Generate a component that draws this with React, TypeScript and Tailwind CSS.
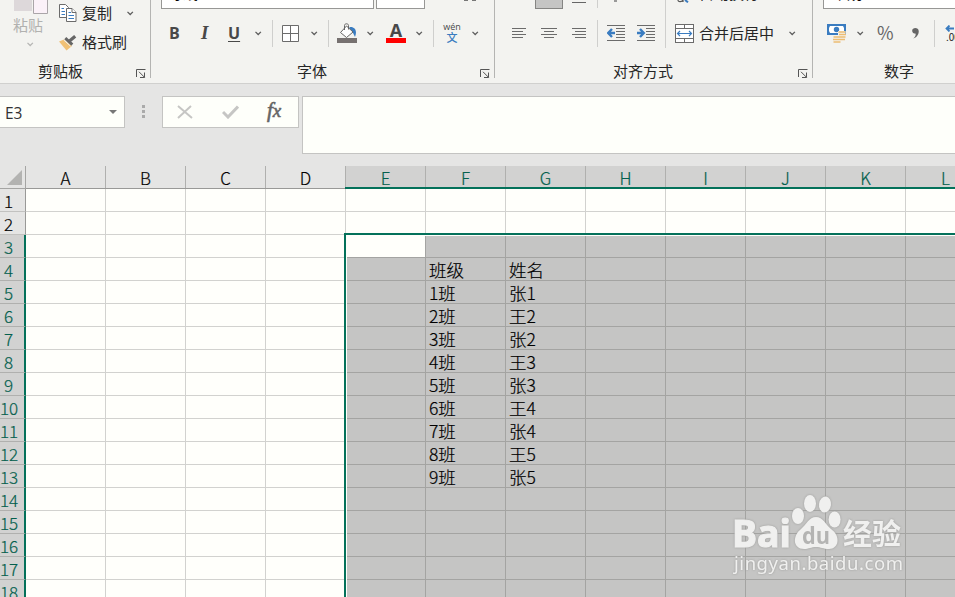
import React from "react";

const CJK = "font-['Noto_Sans_CJK_SC',sans-serif]";
const GRID_TEXT = "font-['Noto_Sans_CJK_SC',sans-serif] font-light [-webkit-text-stroke:0.2px_currentColor]";

function Chevron({ className = "" }: { className?: string }) {
  return (
    <svg width="7" height="5" viewBox="0 0 7 5" className={`shrink-0 ${className}`}>
      <path d="M0.5 0.9 3.2 3.5 5.9 0.9" fill="none" stroke="#5c5c5c" strokeWidth="1.3" />
    </svg>
  );
}

function Launcher() {
  return (
    <svg width="10" height="9" viewBox="0 0 10 9" className="shrink-0" fill="none" stroke="#555">
      <path d="M.5 8V.5H9.5M3 2.8 8.6 8.4M8.5 3.5V8.5H4" />
    </svg>
  );
}

function GroupLabel({ text, pad, launcher = true }: { text: string; pad: string; launcher?: boolean }) {
  return (
    <div className={`mt-auto flex h-[17px] shrink-0 items-start ${pad}`}>
      <span className="grow whitespace-nowrap leading-[20px]">{text}</span>
      {launcher && <div className="pt-[8px]"><Launcher /></div>}
    </div>
  );
}

function CopyIcon() {
  return (
    <svg width="18" height="19" viewBox="0 0 18 19" fill="#fff" stroke="#6b6b6b">
      <path d="M.5 .5H6.5L9.5 3.5V13.5H.5Z" />
      <path d="M7.5 4.5H13L17 8.5V17.5H7.5Z" />
      <path d="M13 4.5V8.5H17" />
      <path d="M2.5 4.5H5M2.5 7.5H6M2.5 10.5H6M9.5 8.5H12M9.5 11.5H15M9.5 14.5H15" stroke="#3a7cc0" />
    </svg>
  );
}

function BrushIcon() {
  return (
    <svg width="18" height="16" viewBox="0 0 18 16">
      <path d="M0 6.5 5 4.5 13 11 7.5 15.5Z" fill="#f0c176" />
      <path d="M6.3 3.2 13.3 9.6" stroke="#666" strokeWidth="3" />
      <path d="M10.8 5.8 16.2 1.2" stroke="#666" strokeWidth="3.2" />
      <path d="M4.8 5 11.6 11.2" stroke="#f3f3f0" strokeWidth="1" />
    </svg>
  );
}

function BucketIcon() {
  return (
    <svg width="20" height="20" viewBox="0 0 20 20">
      <path d="M13 4C18 3.5 20.500 8 18 14C16.5 11 15.5 8 12 5Z" fill="#3a7cc0" />
      <path d="M9.5 3 16 9 9.5 14.5 3.5 9.5Z" fill="#fff" stroke="#666" />
      <path d="M7.5 7V2.5C7.5.2 11.5.2 11.5 2.5V6.5" fill="none" stroke="#666" />
      <path d="M0 15H20V20H0Z" fill="#767170" />
    </svg>
  );
}

function AlignIcon({ kind }: { kind: "left" | "center" | "right" }) {
  const d = {
    left: "M0 .5H14M0 3.5H11M0 6.5H14M0 9.5H11",
    center: "M0 .5H16M3 3.5H13M0 6.5H16M3 9.5H13",
    right: "M0 .5H14M3 3.5H14M0 6.5H14M3 9.5H14",
  }[kind];
  return (
    <svg width={kind === "center" ? 16 : 14} height="10" className="shrink-0">
      <path d={d} stroke="#6b6b6b" />
    </svg>
  );
}

function IndentIcon({ out }: { out?: boolean }) {
  return (
    <svg width="18" height="17" viewBox="0 0 18 17" className="shrink-0" fill="none">
      <path d="M0 .5H18M9 3.5H18M9 6.5H18M9 9.5H18M9 12.5H18M0 15.5H18" stroke="#6b6b6b" />
      {out ? (
        <path d="M8 8H2M5 4 1.2 8 5 12" stroke="#3a7cc0" strokeWidth="2.4" />
      ) : (
        <path d="M0 8H6M3 4 6.8 8 3 12" stroke="#3a7cc0" strokeWidth="2.4" />
      )}
    </svg>
  );
}

function MergeIcon() {
  return (
    <svg width="19" height="19" viewBox="0 0 19 19" className="shrink-0" fill="none" stroke="#6b6b6b">
      <rect x=".5" y=".5" width="18" height="18" fill="#fff" />
      <path d="M0 4.5H19M0 14.5H19M9.5 0V4M9.5 15V19" />
      <path d="M2.5 9.5H16.5M5 7 2.5 9.5 5 12M14 7 16.5 9.5 14 12" stroke="#3a7cc0" strokeWidth="1.2" />
    </svg>
  );
}

function MoneyIcon() {
  return (
    <svg width="19" height="19" viewBox="0 0 19 19" className="shrink-0">
      <rect width="19" height="11" fill="#3a7cc0" />
      <path d="M3 2H16L17 4V7L16 9H3L2 7V4Z" fill="#fff" />
      <circle cx="9.5" cy="5.5" r="2.7" fill="#3a7cc0" />
      <path d="M11 8V7H18.5V17H11Z M6 12H13.5V19H6Z" fill="#f3f3f0" />
      <path d="M11.5 8H18.5M12 10.5H19M11.5 13H18.5M12 15.5H18M6.5 13H13.5M6 15.5H13M6.5 18H13.5" stroke="#edbd72" strokeWidth="1.7" />
    </svg>
  );
}

function Ribbon() {
  return (
    <div className={`flex h-[84px] shrink-0 overflow-hidden border-b border-[#d0d0ce] bg-[#f3f3f0] text-[15px] text-[#262626] ${CJK}`}>
      <section className="flex h-[78px] w-[151px] shrink-0 flex-col border-r border-[#b4b4b2]">
        <div className="flex h-[58px]">
          <div className="flex w-[60px] flex-col items-center text-[#b1b1af]">
            <svg width="34" height="14" className="ml-[2px] shrink-0">
              <path d="M0 0H18V11H0Z" fill="#ddd8da" />
              <path d="M19.500 -1H33.500V13.500H19.500Z" fill="#fbf1f8" stroke="#aaa5a8" />
            </svg>
            <span className="-mt-px whitespace-nowrap pr-1 leading-[24px]">粘贴</span>
            <Chevron className="mt-[5px] opacity-40" />
          </div>
          <div className="flex flex-col">
            <div className="flex h-[27px] items-center">
              <div className="-ml-px w-[23px]"><CopyIcon /></div>
              <span>复制</span>
              <Chevron className="ml-[15px]" />
            </div>
            <div className="flex h-[31px] items-center">
              <div className="-ml-px w-[23px]"><BrushIcon /></div>
              <span>格式刷</span>
            </div>
          </div>
        </div>
        <GroupLabel text="剪贴板" pad="pl-[38px] pr-1" />
      </section>

      <section className="flex h-[78px] w-[344px] shrink-0 flex-col border-r border-[#b4b4b2]">
        <div className="flex h-[9px] shrink-0 overflow-hidden pl-[10px]">
          <div className="flex h-[9px] w-[213px] items-end overflow-hidden border-x border-b border-[#979795] bg-white pl-[6px] text-black"><span className="mb-[8px] leading-[15px]">等线</span></div>
          <div className="ml-[2px] h-[9px] w-[49px] border-x border-b border-[#979795] bg-white" />
          <div className="ml-[39px] h-px w-[4px] bg-[#777]" />
          <div className="ml-[4px] h-px w-[4px] bg-[#777]" />
        </div>
        <div className="flex h-[48px] shrink-0 items-center text-[#484848]">
          <b className="ml-[18px] w-[32px] font-['Open_Sans',sans-serif] text-[16px]">B</b>
          <b className="w-[27px] font-['Liberation_Serif',serif] text-[19px] italic">I</b>
          <b className="w-[27px] font-['Open_Sans',sans-serif] text-[16px] underline underline-offset-2">U</b>
          <Chevron />
          <div className="ml-[10px] h-[27px] w-px bg-[#cfcfcd]" />
          <svg width="17" height="17" className="ml-[9px]" fill="#fff" stroke="#6b6b6b">
            <path d="M.5 .5H16.5V16.500H.5ZM8.500 0V17M0 8.500H17" />
          </svg>
          <Chevron className="ml-[12px]" />
          <div className="ml-[10px] h-[27px] w-px bg-[#cfcfcd]" />
          <div className="ml-[8px]"><BucketIcon /></div>
          <Chevron className="ml-[10px]" />
          <div className="ml-[12px] flex h-[20px] w-[20px] flex-col items-center border-b-[5px] border-[#f00] font-['Open_Sans',sans-serif] text-[18px] font-bold leading-[15px]">A</div>
          <Chevron className="ml-[10px]" />
          <div className="ml-[10px] h-[27px] w-px bg-[#cfcfcd]" />
          <div className="ml-[10px] flex h-[20px] w-[16px] flex-col items-center">
            <span className="font-['Open_Sans',sans-serif] text-[9px] leading-[8px]">wén</span>
            <span className="text-[11px] font-medium leading-[12px] text-[#3a7cc0]">文</span>
          </div>
          <Chevron className="ml-[12px]" />
        </div>
        <GroupLabel text="字体" pad="pl-[146px] pr-1" />
      </section>

      <section className="flex h-[78px] w-[318px] shrink-0 flex-col border-r border-[#b4b4b2]">
        <div className="flex h-[57px]">
          <div className="flex w-[170px] flex-col">
            <div className="flex h-[9px] shrink-0">
              <div className="ml-[40px] h-[9px] w-[28px] border-x border-b border-[#858583] bg-[#c5c5c4]" />
              <div className="ml-[9px] mt-[2px] h-px w-[14px] bg-[#666]" />
              <div className="ml-[11px] h-[8px] w-px bg-[#cfcfcd]" />
              <div className="ml-[16px] h-[2px] w-[3px] bg-[#999]" />
            </div>
            <div className="flex h-[48px] items-center pl-[17px]">
              <AlignIcon kind="left" />
              <div className="ml-[15px]"><AlignIcon kind="center" /></div>
              <div className="ml-[15px]"><AlignIcon kind="right" /></div>
              <div className="ml-[11px] mr-[9px] h-[27px] w-px shrink-0 bg-[#cfcfcd]" />
              <IndentIcon out />
              <div className="ml-[12px]"><IndentIcon /></div>
            </div>
          </div>
          <div className="h-[48px] w-px bg-[#cfcfcd]" />
          <div className="flex flex-col pl-[9px]">
            <div className="flex h-[9px] shrink-0 items-end overflow-hidden pl-[2px]">
              <svg width="14" height="3" className="mb-[6px] shrink-0" fill="none">
                <path d="M1 0C1 2.500 5 2 6 0V2" stroke="#555" strokeWidth="1.2" />
                <path d="M8 0 11 2.300" stroke="#3a7cc0" strokeWidth="2" />
              </svg>
              <span className="mb-[7px] ml-[8px] leading-[18px]">自动换行</span>
            </div>
            <div className="flex h-[48px] items-center">
              <MergeIcon />
              <span className="ml-[5px] whitespace-nowrap">合并后居中</span>
              <Chevron className="ml-[15px]" />
            </div>
          </div>
        </div>
        <GroupLabel text="对齐方式" pad="pl-[118px] pr-1" />
      </section>

      <section className="flex h-[78px] w-[180px] shrink-0 flex-col">
        <div className="ml-[10px] flex h-[9px] shrink-0 items-end overflow-hidden border-b border-l border-[#979795] bg-white pl-2 text-black"><span className="mb-[8px] leading-none">常规</span></div>
        <div className="flex h-[48px] shrink-0 items-center">
          <div className="ml-[14px]"><MoneyIcon /></div>
          <Chevron className="ml-[11px]" />
          <span className="ml-[13px] w-[35px] pb-px text-[18px] text-[#666]">%</span>
          <svg width="8" height="11" viewBox="0 0 7 10" className="shrink-0"><path d="M0 2.500C0 -.8 6 -.8 6 3C6 6 4 9 1 9.500C3 8 3.500 6 3 5C1.500 5 0 4.500 0 2.500Z" fill="#666" /></svg>
          <div className="ml-[14px] h-[27px] w-px shrink-0 bg-[#cfcfcd]" />
          <div className="ml-[10px] flex shrink-0 flex-col text-[10px] leading-[9px]">
            <svg width="10" height="7"><path d="M9 3.500H2M4.500 .5 1.500 3.500 4.500 6.500" fill="none" stroke="#3a7cc0" strokeWidth="1.8" /></svg>
            <span className="ml-px">.00</span>
          </div>
        </div>
        <GroupLabel text="数字" pad="pl-[71px]" launcher={false} />
      </section>
    </div>
  );
}

function FormulaBar() {
  return (
    <div className="flex h-[82px] shrink-0 items-start bg-[#e5e5e4] pt-[12px]">
      <div className="flex h-[32px] w-[125px] items-center justify-between border-y border-r border-[#c4c4c2] bg-[#fefffa] pl-[5px] pr-[7px] font-['Open_Sans',sans-serif] text-[15.500px] leading-[30px] text-[#333]">
        <span className="pt-px">E3</span>
        <svg width="8" height="4"><path d="M0 0H8L4 4Z" fill="#777" /></svg>
      </div>
      <div className="ml-[17px] mt-[9px] flex flex-col gap-[2px]">
        <i className="h-[3px] w-[3px] bg-[#aaa]" />
        <i className="h-[3px] w-[3px] bg-[#aaa]" />
        <i className="h-[3px] w-[3px] bg-[#aaa]" />
      </div>
      <div className="ml-[17px] flex h-[32px] w-[137px] items-center border border-[#c4c4c2] bg-[#fefffa] pl-[14px]">
        <svg width="16" height="14" fill="none" stroke="#c6c6c4" strokeWidth="2"><path d="M1 1 15 13M14 1 1 13" /></svg>
        <svg width="17" height="14" className="ml-[29px]" fill="none" stroke="#c6c6c4" strokeWidth="3"><path d="M1 7 6 12 16 1.500" /></svg>
        <span className="ml-[28px] pb-[3px] font-['Liberation_Serif',serif] text-[21px] italic leading-none text-[#666] [-webkit-text-stroke:0.6px_#666]">f<span className="text-[19px]">x</span></span>
      </div>
      <div className="ml-[3px] h-[58px] grow border-y border-l border-[#c4c4c2] bg-[#fefffa]" />
    </div>
  );
}

const columns = ["A", "B", "C", "D", "E", "F", "G", "H", "I", "J", "K", "L"];
const rows = Array.from({ length: 18 }, (_, i) => i + 1);
const classes: Record<number, [string, string]> = {
  4: ["班级", "姓名"],
  5: ["1班", "张1"],
  6: ["2班", "王2"],
  7: ["3班", "张2"],
  8: ["4班", "王3"],
  9: ["5班", "张3"],
  10: ["6班", "王4"],
  11: ["7班", "张4"],
  12: ["8班", "王5"],
  13: ["9班", "张5"],
};

function ColumnHeaders() {
  return (
    <div className="flex h-[23px] w-[986px] shrink-0 bg-[#e5e5e4]">
      <div className="flex h-[23px] w-[26px] items-end justify-end border-b border-r border-[#a5a5a3] pb-[3px] pr-[3px]">
        <svg width="15" height="15"><path d="M15 0V15H0Z" fill="#b3b3b1" /></svg>
      </div>
      {columns.map((c, i) => (
        <div
          key={c}
          className={`flex shrink-0 flex-col text-center text-[17px] leading-[24px] ${GRID_TEXT} ${i === 4 ? "-ml-px w-[81px]" : "w-[80px]"} ${
            i >= 4 ? "border-b-2 border-b-[#04715a] bg-[#d2d2d1] text-[#04604d]" : "border-b border-b-[#999997] text-black"
          }`}
        >
          <div className={`h-full overflow-hidden border-r border-[#b0b0ae] ${i === 4 ? "border-l" : ""}`}>{c}</div>
        </div>
      ))}
    </div>
  );
}

function Cell({ row, col }: { row: number; col: number }) {
  const selected = row >= 3 && col >= 4;
  const active = row === 3 && col === 4;
  const text = classes[row]?.[col - 5];
  return (
    <div
      className={`h-[23px] w-[80px] shrink-0 whitespace-nowrap border-b border-r pl-[3px] text-[17.500px] leading-[24px] text-black ${GRID_TEXT} ${
        selected ? `border-[#a4a4a2] ${active ? "bg-[#fffffb]" : "bg-[#c5c5c4]"}` : "border-[#d2d2cf] bg-[#fffffb]"
      }`}
    >
      {text}
    </div>
  );
}

function Sheet() {
  return (
    <div className="relative w-[986px] shrink-0">
      {rows.map((r) => (
        <div key={r} className="flex h-[23px]">
          <div
            className={`h-[23px] w-[26px] shrink-0 border-b text-[17px] leading-[23px] ${GRID_TEXT} ${
              r > 2
                ? "border-r-2 border-b-[#b0b0ae] border-r-[#04715a] bg-[#d2d2d1] text-[#04604d]"
                : "border-r border-b-[#c2c2c0] border-r-[#999997] bg-[#e5e5e4] text-black"
            } ${r < 10 ? "pl-[4px]" : ""}`}
          >
            {r}
          </div>
          {columns.map((c, i) => (
            <Cell key={c} row={r} col={i} />
          ))}
        </div>
      ))}
      <div className="absolute bottom-[-10px] left-[344px] right-[-10px] top-[44px] border-2 border-[#04715a]">
        <div className="h-full w-full border-l border-t border-[#fffffb]" />
      </div>
    </div>
  );
}

function Watermark() {
  return (
    <svg width="180" height="88" className="absolute left-[729px] top-[490px] drop-shadow-[0_0_1px_#9b9b99]" fill="#f0f0ef">
      <text x="3" y="57" fontFamily="Open Sans" fontWeight="700" fontSize="37" textLength="59" lengthAdjust="spacingAndGlyphs" stroke="#f0f0ef" strokeWidth="1.2">Bai</text>
      <ellipse cx="69" cy="26" rx="6" ry="8" />
      <ellipse cx="81" cy="13.500" rx="6" ry="8.500" />
      <ellipse cx="96" cy="14.500" rx="6" ry="8" transform="rotate(8 96 14.5)" />
      <ellipse cx="105.600" cy="29.500" rx="6" ry="8" />
      <path d="M87 27C94 27 97 35 102 39C112 46 110 59 100 59C94 59 92 57 87 57C82 57 80 59 75 59C64 59 63 46 72 39C77 35 80 27 87 27Z" />
      <text x="73" y="54" fontFamily="Open Sans" fontWeight="700" fontSize="24" textLength="28" lengthAdjust="spacingAndGlyphs" fill="#b4b4b3">du</text>
      <text x="114" y="55" className={CJK} fontWeight="700" fontSize="29" textLength="58" lengthAdjust="spacingAndGlyphs">经验</text>
      <text x="5" y="80" fontFamily="Noto Sans" fontSize="18.500" textLength="169" lengthAdjust="spacing">jingyan.baidu.com</text>
    </svg>
  );
}

export default function App() {
  return (
    <main className="relative flex h-[597px] w-[955px] flex-col overflow-hidden bg-[#e5e5e4]">
      <Ribbon />
      <FormulaBar />
      <ColumnHeaders />
      <Sheet />
      <Watermark />
    </main>
  );
}
